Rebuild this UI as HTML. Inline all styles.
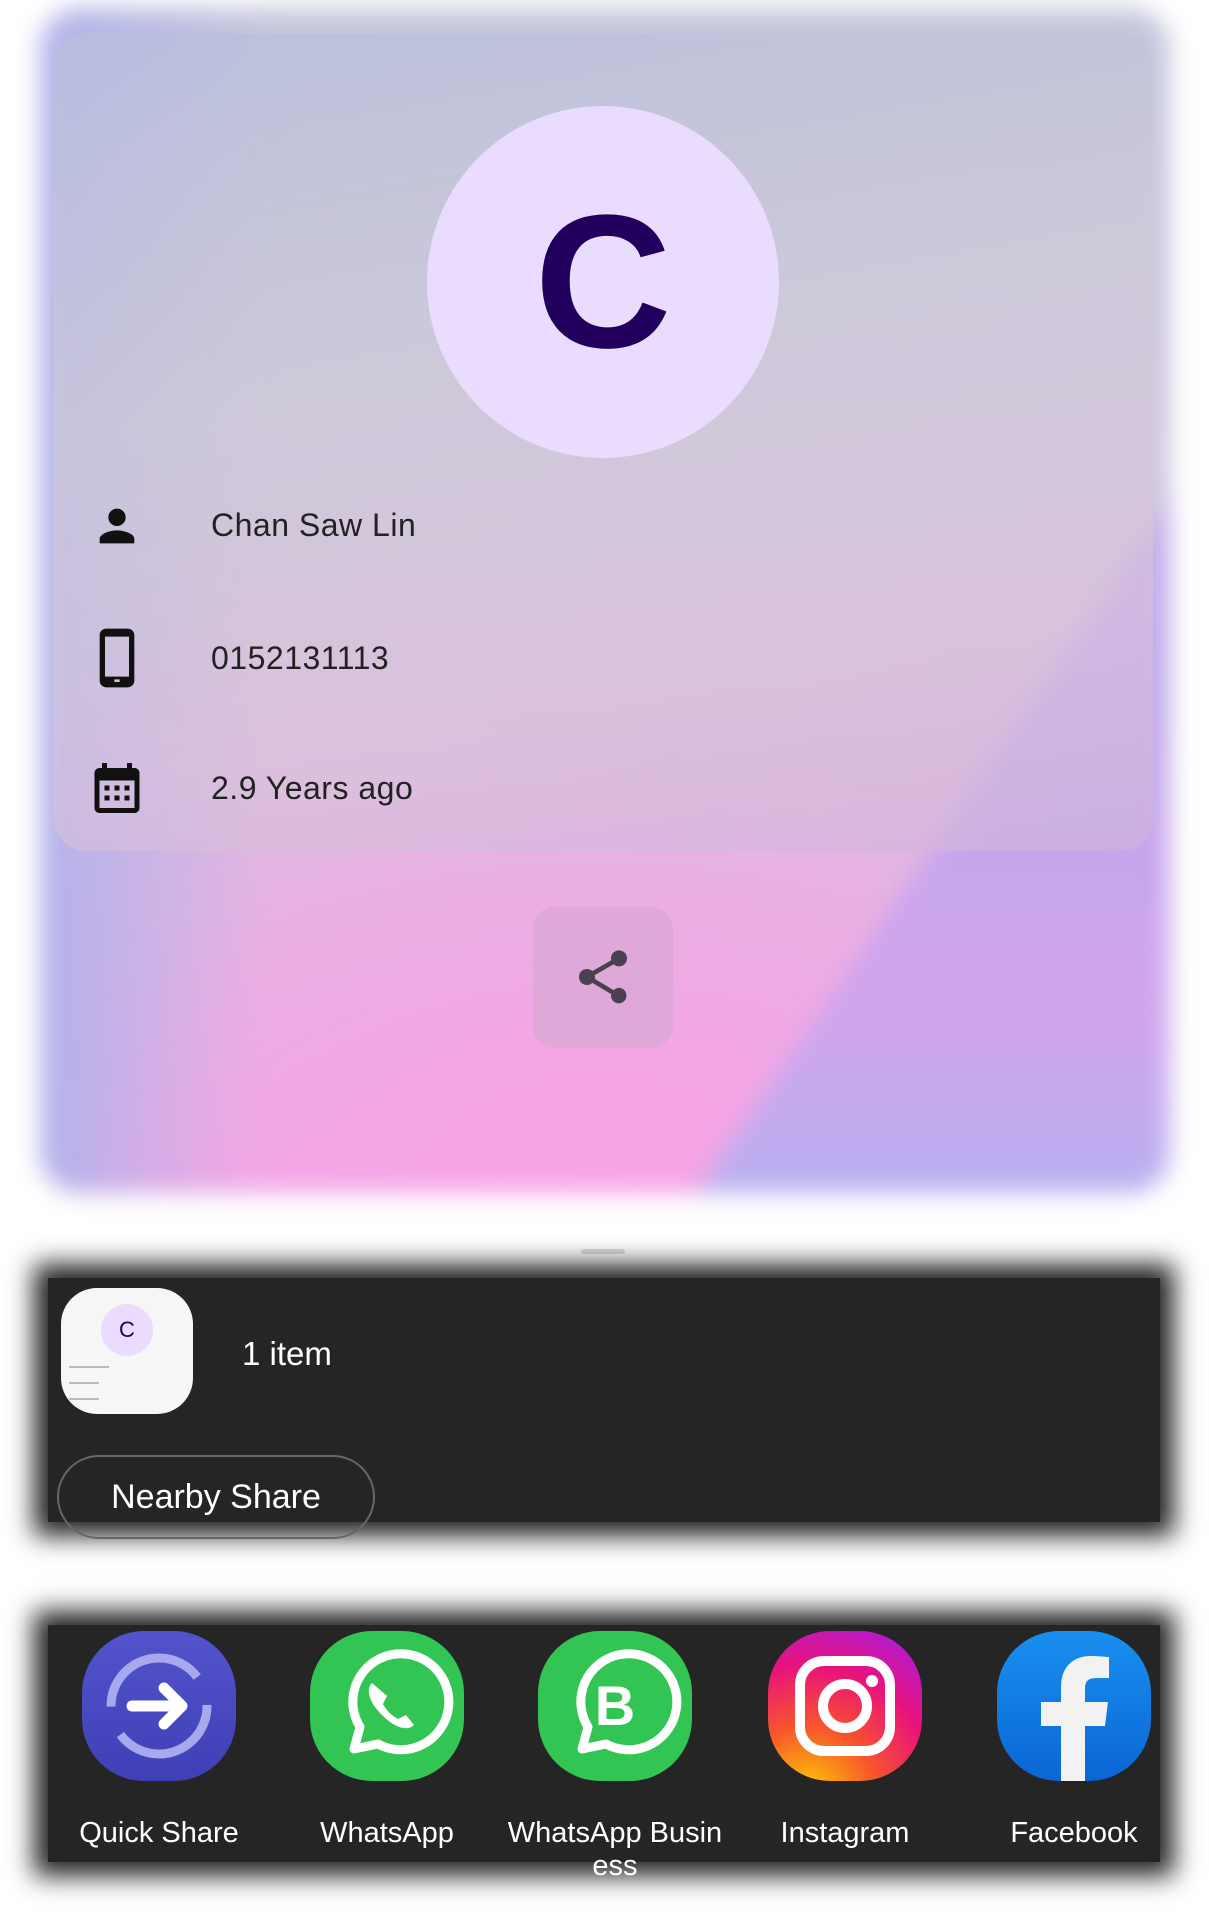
<!DOCTYPE html>
<html><head><meta charset="utf-8"><style>
html,body{margin:0;padding:0;width:1209px;height:1919px;background:#fff;overflow:hidden;font-family:"Liberation Sans",sans-serif;position:relative}
.bgwrap{position:absolute;left:40px;top:8px;width:1130px;height:1185px;border-radius:40px;filter:blur(12px);overflow:hidden}
.bg{position:absolute;left:0;top:0;width:100%;height:100%;
background:radial-gradient(ellipse 520px 420px at 560px 1180px,#f8a2e6 0%,rgba(248,162,230,0) 100%),
linear-gradient(90deg,#b2b2ea 0%,rgba(178,178,234,0) 20%),
linear-gradient(180deg,#c4c6dc 0%,#cfc4dc 45%,#e6b4e2 75%,#f0a8e4 100%);}
.wedge{position:absolute;left:0;top:0;width:100%;height:100%;clip-path:polygon(656px 1185px,1113px 517px,1130px 480px,1130px 1185px);
background:linear-gradient(180deg,#b8aee6 0%,#c0a8ec 60%,#d0a4ee 85%,#b8b0f0 100%)}
.card{position:absolute;left:54px;top:33px;width:1099px;height:818px;border-radius:32px;
background:linear-gradient(170deg,rgba(184,190,220,.75) 0%,rgba(207,203,216,.7) 40%,rgba(220,196,220,.6) 75%,rgba(208,180,218,.6) 100%)}
.avatar{position:absolute;left:427px;top:106px;width:352px;height:352px;border-radius:50%;background:#eadcfe;color:#21005d;font-size:190px;font-weight:bold;text-align:center;line-height:352px}
.row{position:absolute;left:211px;font-size:32px;color:#222;letter-spacing:.5px}
.ic{position:absolute}
.sharebtn{position:absolute;left:533px;top:907px;width:140px;height:141px;border-radius:22px;background:#dea8d8}
.handle{position:absolute;left:581px;top:1249px;width:44px;height:5px;border-radius:3px;background:#ddd}
.panel{position:absolute;left:48px;width:1112px;background:#252525;box-shadow:0 0 24px 14px #252525}
.thumb{position:absolute;left:61px;top:1288px;width:132px;height:126px;border-radius:36px;background:#f6f6f6}
.pill{position:absolute;left:57px;top:1455px;width:314px;height:80px;border:2px solid #666;border-radius:42px;color:#fff;font-size:34px;line-height:80px;text-align:center}
.app{position:absolute;top:1631px;width:154px;height:150px;border-radius:62px}
.lbl{position:absolute;top:1817px;width:230px;text-align:center;color:#fff;font-size:29px;line-height:33px}
</style></head><body>
<div class="bgwrap"><div class="bg"></div><div class="wedge"></div></div>
<div class="card"></div>
<div class="avatar">C</div>
<svg class="ic" style="left:91px;top:500px" width="52" height="52" viewBox="0 0 24 24"><path fill="#111" d="M12 12c2.2 0 4-1.8 4-4s-1.8-4-4-4-4 1.8-4 4 1.8 4 4 4zm0 2c-2.7 0-8 1.3-8 4v2h16v-2c0-2.7-5.3-4-8-4z"/></svg>
<div class="row" style="top:507px">Chan Saw Lin</div>
<svg class="ic" style="left:85px;top:626px" width="64" height="64" viewBox="0 0 24 24"><path fill="#111" d="M16 1H8C6.6 1 5.5 2.1 5.5 3.5v17C5.5 21.9 6.6 23 8 23h8c1.4 0 2.5-1.1 2.5-2.5v-17C18.5 2.1 17.4 1 16 1zm.5 18h-9V4h9v15zm-3.5 2h-2v-1h2v1z"/></svg>
<div class="row" style="top:640px">0152131113</div>
<svg class="ic" style="left:87px;top:758px" width="60" height="60" viewBox="0 0 24 24"><path fill="#111" d="M19 4h-1V2h-2v2H8V2H6v2H5C3.9 4 3 4.9 3 6v14c0 1.1.9 2 2 2h14c1.1 0 2-.9 2-2V6c0-1.1-.9-2-2-2zm0 16H5V9h14v11zM7 11h2v2H7zm4 0h2v2h-2zm4 0h2v2h-2zM7 15h2v2H7zm4 0h2v2h-2zm4 0h2v2h-2z"/></svg>
<div class="row" style="top:770px">2.9 Years ago</div>
<div class="sharebtn"><svg style="position:absolute;left:38px;top:38px" width="64" height="64" viewBox="0 0 24 24"><path fill="#4a4050" d="M18 16.1c-.8 0-1.4.3-2 .8l-7.1-4.2c.1-.2.1-.5.1-.7s0-.5-.1-.7L16 7.2c.5.5 1.2.8 2 .8 1.7 0 3-1.3 3-3s-1.3-3-3-3-3 1.3-3 3c0 .2 0 .5.1.7L8 9.8C7.5 9.3 6.8 9 6 9c-1.7 0-3 1.3-3 3s1.3 3 3 3c.8 0 1.5-.3 2-.8l7.1 4.2c-.1.2-.1.4-.1.6 0 1.6 1.3 2.9 2.9 2.9s2.9-1.3 2.9-2.9-1.2-2.9-2.8-2.9z"/></svg></div>
<div class="handle"></div>
<div class="panel" style="top:1278px;height:244px"></div>
<div class="thumb"><div style="position:absolute;left:40px;top:16px;width:52px;height:52px;border-radius:50%;background:#eadcfe;color:#21005d;font-size:22px;line-height:52px;text-align:center">C</div>
<div style="position:absolute;left:8px;top:78px;width:40px;height:2px;background:#bbb"></div><div style="position:absolute;left:8px;top:94px;width:30px;height:2px;background:#bbb"></div><div style="position:absolute;left:8px;top:110px;width:30px;height:2px;background:#bbb"></div></div>
<div style="position:absolute;left:242px;top:1335px;color:#fff;font-size:33px">1 item</div>
<div class="pill">Nearby Share</div>
<div class="panel" style="top:1625px;height:237px"></div>
<div class="app" style="left:82px;background:linear-gradient(#5353cc,#3f3fb6)"><svg width="154" height="150" viewBox="0 0 154 150"><circle cx="77" cy="75" r="48" fill="none" stroke="#a8a8ee" stroke-width="9" stroke-dasharray="120 30"/><path d="M50 75h50M82 57l18 18-18 18" fill="none" stroke="#fff" stroke-width="11" stroke-linecap="round" stroke-linejoin="round"/></svg></div>
<div class="app" style="left:310px;background:#33c553"><svg width="154" height="150" viewBox="0 0 154 150"><path d="M44 118l6-22a48 48 0 1 1 18 17z" fill="none" stroke="#fff" stroke-width="9" stroke-linejoin="round"/><path d="M62 52c-6 6-4 18 10 32s26 16 32 10l-8-10-8 4c-6-3-12-9-15-15l4-8z" fill="#fff"/></svg></div>
<div class="app" style="left:538px;background:#33c553"><svg width="154" height="150" viewBox="0 0 154 150"><path d="M44 118l6-22a48 48 0 1 1 18 17z" fill="none" stroke="#fff" stroke-width="9" stroke-linejoin="round"/><text x="77" y="94" text-anchor="middle" fill="#fff" font-size="56" font-weight="bold" font-family="Liberation Sans">B</text></svg></div>
<div class="app" style="left:768px;background:radial-gradient(circle at 25% 110%,#fcd200 0%,#f8542c 35%,#e8127c 65%,#b31bd0 90%)"><svg width="154" height="150" viewBox="0 0 154 150"><rect x="32" y="30" width="90" height="90" rx="24" fill="none" stroke="#fff" stroke-width="10"/><circle cx="77" cy="75" r="22" fill="none" stroke="#fff" stroke-width="10"/><circle cx="104" cy="50" r="6" fill="#fff"/></svg></div>
<div class="app" style="left:997px;background:linear-gradient(#1a8ff0,#0a66d4);overflow:hidden"><svg width="154" height="150" viewBox="0 0 154 150"><path d="M88 150V95h20l3-24H88V58c0-7 2-11 12-11h12V26c-3 0-10-1-18-1-18 0-30 11-30 31v15H44v24h20v55z" fill="#f2f2f2"/></svg></div>
<div class="lbl" style="left:44px">Quick Share</div>
<div class="lbl" style="left:272px">WhatsApp</div>
<div class="lbl" style="left:500px">WhatsApp Busin<br>ess</div>
<div class="lbl" style="left:730px">Instagram</div>
<div class="lbl" style="left:959px">Facebook</div>
</body></html>
